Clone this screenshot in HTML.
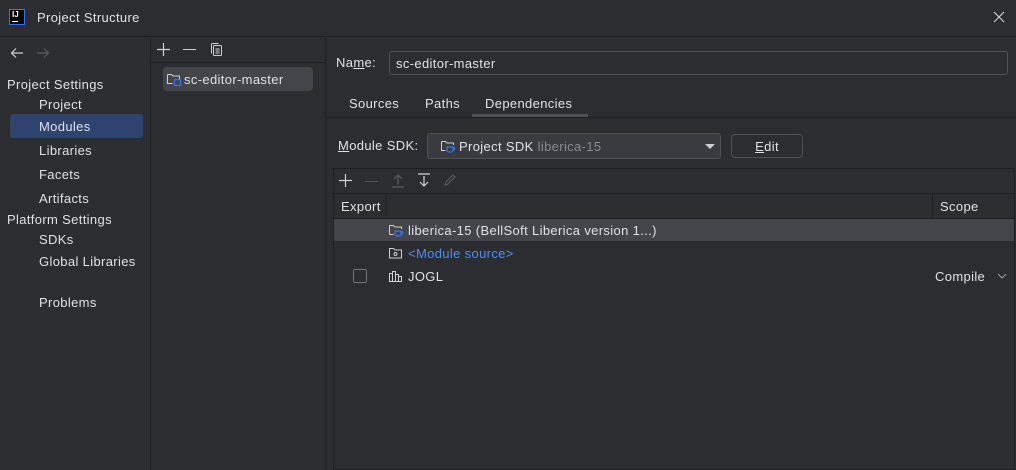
<!DOCTYPE html>
<html><head><style>
*{margin:0;padding:0;box-sizing:border-box}
body{width:1016px;height:470px;background:#2b2d30;font-family:"Liberation Sans",sans-serif;font-size:13px;letter-spacing:0.35px;color:#dfe1e5;position:relative;overflow:hidden}
.a{position:absolute;white-space:nowrap}
.u{text-decoration:underline}
</style></head><body>
<div class="a" style="left:0;top:0;width:1016px;height:37px;border-bottom:1px solid #1e1f22"></div>
<div class="a" style="left:9px;top:9px;width:16px;height:16px;background:#000;border:1px solid #3574f0"></div>
<div class="a" style="left:12px;top:10px;font-size:8px;font-weight:bold;color:#fff;letter-spacing:0">IJ</div>
<div class="a" style="left:12px;top:21px;width:6px;height:1px;background:#fff"></div>
<div class="a" style="left:37px;top:10px">Project Structure</div>
<svg class="a" style="left:993px;top:11px" width="12" height="12"><path d="M1 1l10 10M11 1L1 11" stroke="#ced0d6" stroke-width="1.2"/></svg>
<div class="a" style="left:150px;top:38px;width:1px;height:432px;background:#1e1f22"></div>
<div class="a" style="left:325px;top:38px;width:1px;height:432px;background:#1e1f22"></div>
<div class="a" style="left:151px;top:62px;width:174px;height:1px;background:#1e1f22"></div>
<svg class="a" style="left:10px;top:47px" width="14" height="12"><path d="M13 6H2M6 1.5L1.5 6 6 10.5" fill="none" stroke="#ced0d6" stroke-width="1.2"/></svg>
<svg class="a" style="left:36px;top:47px" width="14" height="12"><path d="M1 6h11M8 1.5L12.5 6 8 10.5" fill="none" stroke="#5a5d63" stroke-width="1.2"/></svg>
<div class="a" style="left:7px;top:77px">Project Settings</div>
<div class="a" style="left:39px;top:97px">Project</div>
<div class="a" style="left:10px;top:114px;width:133px;height:24px;background:#2e436e;border-radius:3px"></div>
<div class="a" style="left:39px;top:119px">Modules</div>
<div class="a" style="left:39px;top:143px">Libraries</div>
<div class="a" style="left:39px;top:167px">Facets</div>
<div class="a" style="left:39px;top:191px">Artifacts</div>
<div class="a" style="left:7px;top:212px">Platform Settings</div>
<div class="a" style="left:39px;top:232px">SDKs</div>
<div class="a" style="left:39px;top:254px">Global Libraries</div>
<div class="a" style="left:39px;top:295px">Problems</div>
<svg class="a" style="left:157px;top:43px" width="13" height="13"><path d="M6.5 0v13M0 6.5h13" stroke="#ced0d6" stroke-width="1.2"/></svg>
<div class="a" style="left:183px;top:49px;width:13px;height:1px;background:#ced0d6"></div>
<svg class="a" style="left:209px;top:42px" width="14" height="15"><rect x="4.5" y="3.5" width="8" height="10" rx="1" fill="none" stroke="#ced0d6"/><path d="M2.5 11.5v-9a1 1 0 0 1 1-1h6" fill="none" stroke="#ced0d6"/><path d="M6.5 7h4M6.5 9h4M6.5 11h4" stroke="#ced0d6"/></svg>
<div class="a" style="left:163px;top:67px;width:150px;height:24px;background:#43454a;border-radius:4px"></div>
<svg class="a" style="left:166px;top:71px" width="16" height="16"><path d="M1.5 3.5h4l1.5 1.5h6.5v3M1.5 3.5v9h5" fill="none" stroke="#ced0d6"/><rect x="8.5" y="8.5" width="6" height="6" rx="1" fill="none" stroke="#3574f0" stroke-width="1.3"/></svg>
<div class="a" style="left:184px;top:72px">sc-editor-master</div>
<div class="a" style="left:336px;top:55px">Na<span class="u">m</span>e:</div>
<div class="a" style="left:389px;top:51px;width:619px;height:24px;border:1px solid #4e5157;border-radius:3px;padding:4px 6px">sc-editor-master</div>
<div class="a" style="left:349px;top:96px">Sources</div>
<div class="a" style="left:425px;top:96px">Paths</div>
<div class="a" style="left:485px;top:96px">Dependencies</div>
<div class="a" style="left:472px;top:114px;width:116px;height:3px;background:#4e5157"></div>
<div class="a" style="left:326px;top:117px;width:690px;height:1px;background:#1e1f22"></div>
<div class="a" style="left:338px;top:138px"><span class="u">M</span>odule SDK:</div>
<div class="a" style="left:427px;top:133px;width:294px;height:26px;background:#393b40;border:1px solid #4e5157;border-radius:3px"></div>
<svg class="a" style="left:440px;top:138px" width="16" height="16"><path d="M1.5 3.5h4l1.5 1.5h6.5v2M1.5 3.5v9h4" fill="none" stroke="#ced0d6"/><path d="M7 9h6v3a2 2 0 0 1-2 2h-2a2 2 0 0 1-2-2z M13 10h1.5v1.5H13" fill="none" stroke="#3574f0" stroke-width="1.3"/></svg>
<div class="a" style="left:459px;top:139px">Project SDK <span style="color:#868a91">liberica-15</span></div>
<div class="a" style="left:705px;top:144px;width:0;height:0;border-left:5px solid transparent;border-right:5px solid transparent;border-top:5px solid #ced0d6"></div>
<div class="a" style="left:731px;top:134px;width:72px;height:24px;border:1px solid #4e5157;border-radius:4px;text-align:center;padding-top:4px"><span class="u">E</span>dit</div>
<div class="a" style="left:333px;top:168px;width:682px;height:302px;border:1px solid #1e1f22;background:#2b2d30"></div>
<svg class="a" style="left:339px;top:174px" width="13" height="13"><path d="M6.5 0v13M0 6.5h13" stroke="#ced0d6" stroke-width="1.2"/></svg>
<div class="a" style="left:365px;top:181px;width:13px;height:1px;background:#4e5157"></div>
<svg class="a" style="left:391px;top:173px" width="14" height="15"><path d="M1 14h12M7 12V2M3 6l4-4 4 4" fill="none" stroke="#5a5d63" stroke-width="1.2"/></svg>
<svg class="a" style="left:417px;top:173px" width="14" height="15"><path d="M1 1h12M7 3v10M3 9l4 4 4-4" fill="none" stroke="#ced0d6" stroke-width="1.2"/></svg>
<svg class="a" style="left:443px;top:173px" width="14" height="14"><path d="M2 12l1-3 7-7 2 2-7 7z" fill="none" stroke="#5a5d63" stroke-width="1.1"/></svg>
<div class="a" style="left:334px;top:193px;width:680px;height:1px;background:#1e1f22"></div>
<div class="a" style="left:334px;top:218px;width:680px;height:1px;background:#1e1f22"></div>
<div class="a" style="left:386px;top:195px;width:1px;height:22px;background:#1e1f22"></div>
<div class="a" style="left:932px;top:195px;width:1px;height:22px;background:#1e1f22"></div>
<div class="a" style="left:341px;top:199px">Export</div>
<div class="a" style="left:940px;top:199px">Scope</div>
<div class="a" style="left:334px;top:219px;width:680px;height:22px;background:#43454a"></div>
<svg class="a" style="left:388px;top:222px" width="16" height="16"><path d="M1.5 3.5h4l1.5 1.5h6.5v2M1.5 3.5v9h4" fill="none" stroke="#ced0d6"/><path d="M7 9h6v3a2 2 0 0 1-2 2h-2a2 2 0 0 1-2-2z M13 10h1.5v1.5H13" fill="none" stroke="#3574f0" stroke-width="1.3"/></svg>
<div class="a" style="left:408px;top:223px">liberica-15 (BellSoft Liberica version 1...)</div>
<svg class="a" style="left:388px;top:245px" width="16" height="16"><path d="M1.5 3.5h4l1.5 1.5h6.5v8h-12z" fill="none" stroke="#ced0d6"/><circle cx="7.5" cy="9" r="1.5" fill="none" stroke="#ced0d6"/></svg>
<div class="a" style="left:408px;top:246px;color:#548af7">&lt;Module source&gt;</div>
<div class="a" style="left:353px;top:269px;width:14px;height:14px;border:1px solid #6f737a;border-radius:2px"></div>
<svg class="a" style="left:388px;top:268px" width="16" height="16"><path d="M1.5 5.5h3v8h-3z M4.5 3.5h3v10h-3z M7.5 6.5h3v7h-3z M10.5 8.5h3v5h-3z" fill="none" stroke="#ced0d6"/></svg>
<div class="a" style="left:408px;top:269px">JOGL</div>
<div class="a" style="left:935px;top:269px">Compile</div>
<svg class="a" style="left:997px;top:272px" width="10" height="8"><path d="M1 2l4 4 4-4" fill="none" stroke="#9da0a8"/></svg>
</body></html>
